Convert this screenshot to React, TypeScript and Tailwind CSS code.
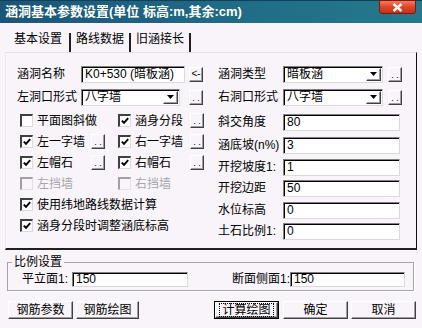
import type { ReactNode } from 'react';

const raised =
  'border border-t-white border-l-white border-r-[#404040] border-b-[#404040] shadow-[inset_-1px_-1px_0_#a09ca4]';
const sunken =
  'bg-white border border-t-[#808080] border-l-[#808080] border-r-[#dcd8de] border-b-[#dcd8de] shadow-[inset_1px_1px_0_#000]';

function Dots() {
  return (
    <span className={`${raised} w-[14px] h-[15px] shrink-0 flex items-end justify-center text-[9px] leading-[10px] pb-[1px]`}>
      . .
    </span>
  );
}

function Field({ value, w }: { value: string; w: string }) {
  return (
    <span className={`${sunken} ${w} h-[17px] shrink-0 flex items-center pl-[3px] leading-none whitespace-nowrap overflow-hidden`}>
      {value}
    </span>
  );
}

function Select({ value, w }: { value: string; w: string }) {
  return (
    <span className={`${sunken} ${w} h-[17px] shrink-0 flex items-center justify-between pl-[3px] pr-[1px] leading-none`}>
      <span>{value}</span>
      <span className={`${raised} w-[15px] h-[13px] flex items-center justify-center`}>
        <svg width="7" height="4" viewBox="0 0 7 4">
          <path d="M0 0h7L3.5 4z" fill="#000" />
        </svg>
      </span>
    </span>
  );
}

function Check({ on, off }: { on?: boolean; off?: boolean }) {
  return (
    <span
      className={
        off
          ? 'w-[13px] h-[13px] shrink-0 bg-[#f8f4fa] border-t-2 border-l-2 border-r border-b border-t-[#a0a0a0] border-l-[#a0a0a0] border-r-[#e4e0e6] border-b-[#e4e0e6]'
          : 'w-[13px] h-[13px] shrink-0 bg-white border-t-2 border-l-2 border-r border-b border-t-[#404040] border-l-[#404040] border-r-[#dcd8de] border-b-[#dcd8de] flex items-center justify-center'
      }
    >
      {on && (
        <svg width="8" height="8" viewBox="0 0 8 8">
          <path d="M0.8 3.6 L3 5.8 L7.2 1.2" stroke="#000" strokeWidth="2" fill="none" />
        </svg>
      )}
    </span>
  );
}

function CheckItem({ label, on, off, w, btn }: { label: string; on?: boolean; off?: boolean; w: string; btn?: boolean }) {
  return (
    <div className={`${w} flex items-center shrink-0`}>
      <Check on={on} off={off} />
      <span className={off ? 'ml-[4px] text-[#a8a4ac]' : 'ml-[4px]'}>{label}</span>
      {btn && <span className="ml-auto"><Dots /></span>}
    </div>
  );
}

function Btn({ children, w, focus }: { children: ReactNode; w: string; focus?: boolean }) {
  if (focus) {
    return (
      <div className={`${w} h-[18px] border border-black shrink-0 flex`}>
        <div className={`${raised} flex-1 flex items-center justify-center`}>
          <span className="border border-dotted border-black px-[2px] leading-[12px]">{children}</span>
        </div>
      </div>
    );
  }
  return (
    <div className={`${raised} ${w} h-[18px] shrink-0 flex items-center justify-center leading-none`}>{children}</div>
  );
}

function RightRow({ label, value, mt }: { label: string; value: string; mt: string }) {
  return (
    <div className={`${mt} flex items-center`}>
      <span className="w-[65px] shrink-0 whitespace-nowrap">{label}</span>
      <Field value={value} w="w-[117px]" />
    </div>
  );
}

export default function App() {
  return (
    <div className="w-[422px] h-[328px] bg-[#f8f4fa] overflow-hidden text-[12px] text-black font-['Liberation_Sans','Noto_Sans_CJK_SC',sans-serif] flex flex-col">
      {/* title bar */}
      <div className="h-[23px] shrink-0 bg-linear-to-r from-[#1b5578] via-[#1f6a86] to-[#247a8c] border-t border-[#143f58] flex items-start justify-between pl-[5px] pr-[6px]">
        <span className="mt-[3px] text-white font-bold text-[13px] leading-[15px] whitespace-nowrap">
          涵洞基本参数设置(单位 标高:m,其余:cm)
        </span>
        <span className="w-[37px] h-[14px] -mt-px rounded-b-[3px] border border-[#7a1a10] bg-linear-to-b from-[#f47a5a] via-[#e04428] to-[#c83018] flex items-center justify-center">
          <svg width="11" height="9" viewBox="0 0 11 9">
            <path d="M1.5 1 L9.5 8 M9.5 1 L1.5 8" stroke="#fff" strokeWidth="2.4" />
          </svg>
        </span>
      </div>

      {/* tabs */}
      <div className="h-[29px] shrink-0 flex items-end pl-[14px]">
        <div className="h-[19px] pr-[7px] border-r-2 border-[#202020] leading-[13px]">基本设置</div>
        <div className="h-[19px] px-[5px] border-r-2 border-[#202020] leading-[13px]">路线数据</div>
        <div className="h-[19px] px-[5px] border-r-2 border-[#202020] leading-[13px]">旧涵接长</div>
      </div>

      {/* tab panel */}
      <div className="ml-[5px] w-[412px] h-[198px] shrink-0 border-t border-l border-t-[#e4e0e8] border-l-[#eeeaf0] border-r border-r-[#101010] border-b-2 border-b-[#202020] flex pl-[11px] pt-[12px]">
        {/* left column */}
        <div className="w-[188px] shrink-0 flex flex-col">
          <div className="flex items-center">
            <span className="w-[64px] shrink-0">涵洞名称</span>
            <Field value="K0+530 (暗板涵)" w="w-[104px]" />
            <span className={`${raised} ml-[4px] w-[14px] h-[15px] flex items-center justify-center text-[10px] leading-none`}>&lt;-</span>
          </div>
          <div className="mt-[5px] flex items-center">
            <span className="w-[64px] shrink-0 whitespace-nowrap">左洞口形式</span>
            <Select value="八字墙" w="w-[99px]" />
            <span className="ml-[9px]"><Dots /></span>
          </div>
          <div className="mt-[4px] h-[21px] flex items-center pl-[3px]">
            <CheckItem label="平面图斜做" w="w-[98px]" />
            <CheckItem label="涵身分段" on w="w-[86px]" btn />
          </div>
          <div className="h-[21px] flex items-center pl-[3px]">
            <CheckItem label="左一字墙" on w="w-[85px]" btn />
            <span className="w-[13px]" />
            <CheckItem label="右一字墙" on w="w-[86px]" btn />
          </div>
          <div className="h-[21px] flex items-center pl-[3px]">
            <CheckItem label="左帽石" on w="w-[85px]" btn />
            <span className="w-[13px]" />
            <CheckItem label="右帽石" on w="w-[86px]" btn />
          </div>
          <div className="h-[21px] flex items-center pl-[3px]">
            <CheckItem label="左挡墙" off w="w-[98px]" />
            <CheckItem label="右挡墙" off w="w-[86px]" />
          </div>
          <div className="h-[21px] flex items-center pl-[3px]">
            <CheckItem label="使用纬地路线数据计算" on w="w-[180px]" />
          </div>
          <div className="h-[21px] flex items-center pl-[3px]">
            <CheckItem label="涵身分段时调整涵底标高" on w="w-[180px]" />
          </div>
        </div>

        {/* right column */}
        <div className="ml-[13px] w-[186px] shrink-0 flex flex-col">
          <div className="flex items-center">
            <span className="w-[65px] shrink-0">涵洞类型</span>
            <Select value="暗板涵" w="w-[100px]" />
            <span className="ml-[5px]"><Dots /></span>
          </div>
          <div className="mt-[5px] flex items-center">
            <span className="w-[65px] shrink-0 whitespace-nowrap">右洞口形式</span>
            <Select value="八字墙" w="w-[100px]" />
            <span className="ml-[5px]"><Dots /></span>
          </div>
          <RightRow label="斜交角度" value="80" mt="mt-[7px]" />
          <RightRow label="涵底坡(n%)" value="3" mt="mt-[5px]" />
          <RightRow label="开挖坡度1:" value="1" mt="mt-[4px]" />
          <RightRow label="开挖边距" value="50" mt="mt-[3px]" />
          <RightRow label="水位标高" value="0" mt="mt-[4px]" />
          <RightRow label="土石比例1:" value="0" mt="mt-[3px]" />
        </div>
      </div>

      {/* scale group */}
      <fieldset className="mt-[5px] ml-[7px] w-[407px] h-[36px] shrink-0 border border-[#a8a4ac] shadow-[1px_1px_0_#fff]">
        <legend className="ml-[4px] px-[2px] leading-[14px]">比例设置</legend>
        <div className="flex items-center pl-[14px] pt-[1px]">
          <span className="w-[50px] shrink-0 whitespace-nowrap">平立面1:</span>
          <span className={`${sunken} w-[116px] h-[15px] shrink-0 flex items-center pl-[3px] leading-none`}>150</span>
          <span className="ml-[44px] w-[58px] shrink-0 whitespace-nowrap">断面侧面1:</span>
          <span className={`${sunken} w-[115px] h-[15px] shrink-0 flex items-center pl-[3px] leading-none`}>150</span>
        </div>
      </fieldset>

      {/* bottom buttons */}
      <div className="mt-[10px] flex items-center pl-[8px]">
        <Btn w="w-[65px]">钢筋参数</Btn>
        <span className="ml-[3px]"><Btn w="w-[63px]">钢筋绘图</Btn></span>
        <span className="ml-[75px]"><Btn w="w-[65px]" focus>计算绘图</Btn></span>
        <span className="ml-[4px]"><Btn w="w-[65px]">确定</Btn></span>
        <span className="ml-[3px]"><Btn w="w-[65px]">取消</Btn></span>
      </div>
    </div>
  );
}
